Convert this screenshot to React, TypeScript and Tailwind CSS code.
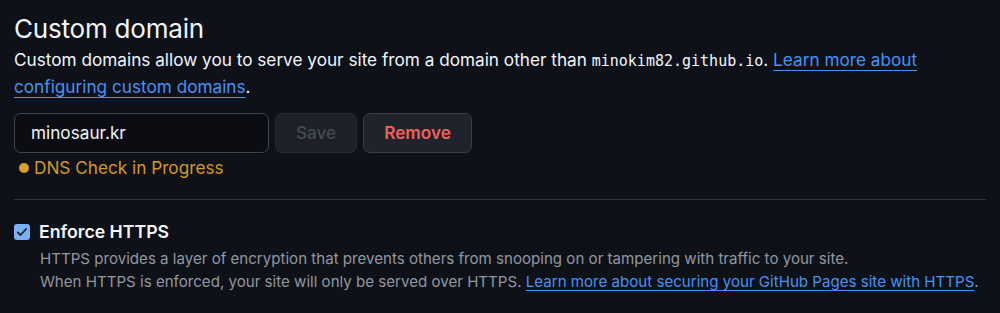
import React from "react";

export default function App() {
  const font = { fontFamily: "Inter, 'Noto Sans', sans-serif" };
  return (
    <div className="w-[1000px] h-[313px] bg-[#0e1117] text-[#f0f6fc] overflow-hidden" style={font}>
      <div className="pl-[14px] pr-[14px] pt-[12px]">
        <h2 className="text-[26px] leading-[34px] font-normal tracking-[-0.2px]">Custom domain</h2>
        <p className="text-[17.2px] leading-[25px] mt-[1px]">
          Custom domains allow you to serve your site from a domain other than{" "}
          <code className="text-[15px]" style={{ fontFamily: "'DejaVu Sans Mono', monospace" }}>minokim82.github.io</code>.{" "}
          <a className="text-[#4493f8] underline underline-offset-[4px] decoration-[1px]">Learn more about configuring custom domains</a>.
        </p>
        <div className="flex items-center gap-[6px] mt-[14px]">
          <div className="w-[255px] h-[40px] rounded-[7px] border border-[#3d444d] bg-[#0b0d12] flex items-center px-[16px] text-[17.2px]">
            minosaur.kr
          </div>
          <button className="w-[82px] h-[40px] rounded-[7px] border border-[#262a31] bg-[#1c2027] text-[#464b53] text-[17.2px] font-medium">
            Save
          </button>
          <button className="w-[109px] h-[40px] rounded-[7px] border border-[#3a3f47] bg-[#1f242c] text-[#f0605a] text-[17.2px] font-semibold">
            Remove
          </button>
        </div>
        <div className="flex items-center gap-[5px] mt-[3px] pl-[5px] text-[#d29922] text-[17.2px] leading-[24px]">
          <span className="w-[10px] h-[10px] rounded-full bg-[#d9a227] inline-block" />
          DNS Check in Progress
        </div>
        <div className="h-px bg-[#30363d] mt-[19px] mb-[20px]" />
        <div className="flex items-center gap-[9px]">
          <span className="w-[16px] h-[16px] rounded-[3px] bg-[#79b1f4] flex items-center justify-center">
            <svg width="12" height="12" viewBox="0 0 16 16">
              <path d="M2.5 8.5l3.5 3.5 7.5-8" stroke="#1d232c" strokeWidth="2.4" fill="none" strokeLinecap="round" strokeLinejoin="round" />
            </svg>
          </span>
          <span className="text-[17.7px] font-semibold leading-[24px]">Enforce HTTPS</span>
        </div>
        <div className="pl-[26px] text-[15.1px] leading-[23px] text-[#9198a1] mt-[3px]">
          <div>HTTPS provides a layer of encryption that prevents others from snooping on or tampering with traffic to your site.</div>
          <div>
            When HTTPS is enforced, your site will only be served over HTTPS.{" "}
            <a className="text-[#4493f8] underline underline-offset-[3px] decoration-[1px]">Learn more about securing your GitHub Pages site with HTTPS</a>.
          </div>
        </div>
      </div>
    </div>
  );
}
